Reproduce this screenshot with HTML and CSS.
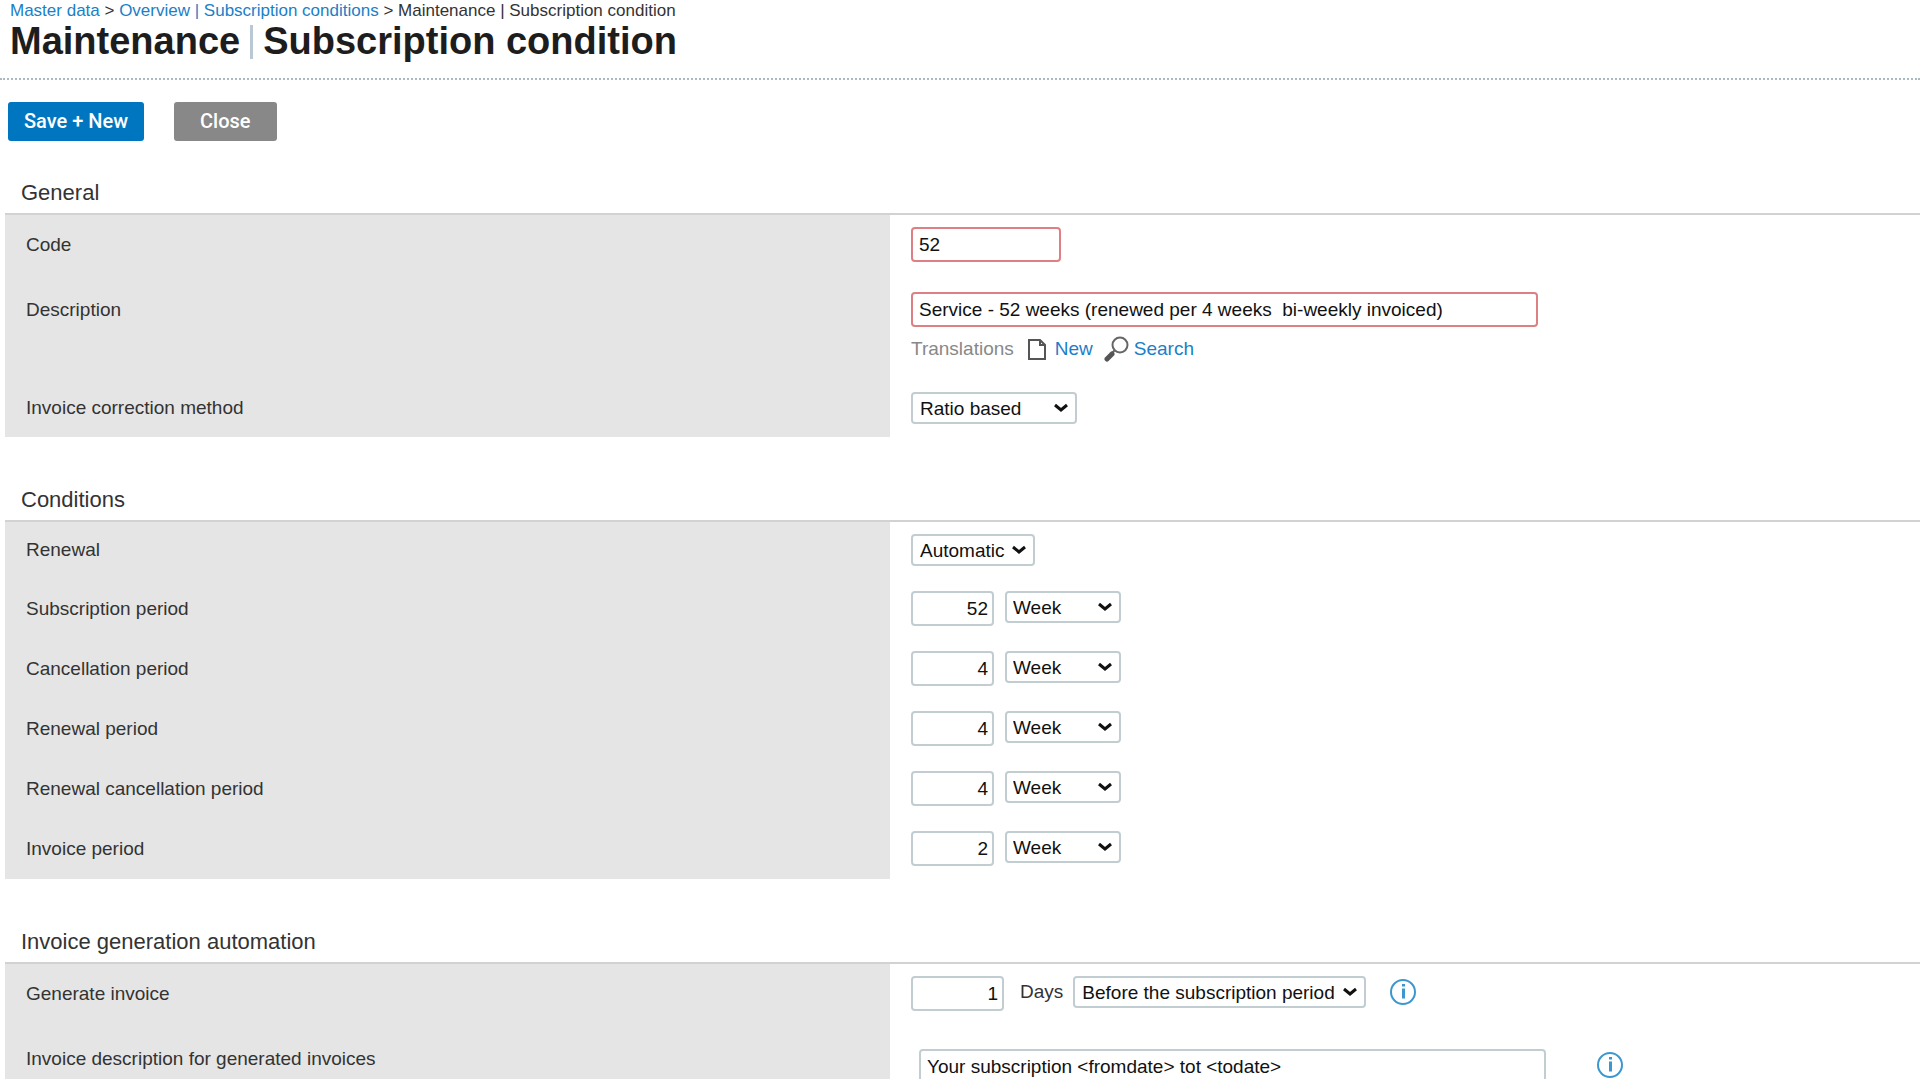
FILE: index.html
```html
<!DOCTYPE html>
<html lang="en">
<head>
    <meta charset="UTF-8">
    <title>Maintenance | Subscription condition</title>
    <link rel="stylesheet" href="styles.css">
</head>
<body>
    <header class="page-header">
        <nav class="breadcrumb">
            <a href="#">Master data</a> &gt; <a href="#">Overview | Subscription conditions</a> &gt; Maintenance | Subscription condition
        </nav>
        <h1>Maintenance<span class="divider"></span>Subscription condition</h1>
    </header>

    <form>
        <div class="toolbar">
            <button type="submit" class="primary">Save + New</button>
            <button type="button">Close</button>
        </div>

        <section>
            <h2>General</h2>
            <div class="row roomy">
                <label for="code">Code</label>
                <div class="field">
                    <input type="text" id="code" class="required short" value="52">
                </div>
            </div>
            <div class="row roomy">
                <label for="description">Description</label>
                <div class="field">
                    <input type="text" id="description" class="required long" value="Service - 52 weeks (renewed per 4 weeks  bi-weekly invoiced)">
                    <div class="translations">
                        <span>Translations</span>
                        <a href="#" class="new">
                            <svg width="20" height="22" viewBox="0 0 20 22" fill="none" stroke="#555" stroke-width="2">
                                <path d="M2 2h11l5 5v14H2z"/>
                                <path d="M13 2v5h5"/>
                            </svg>
                            New
                        </a>
                        <a href="#" class="search">
                            <svg width="27" height="26" viewBox="0 0 27 26" fill="none" stroke="#666">
                                <circle cx="17" cy="9" r="7.5" stroke-width="2"/>
                                <path d="M11.500 14.500l-2 2" stroke-width="2"/>
                                <path d="M9 18l-5 5" stroke="#555" stroke-width="5" stroke-linecap="round"/>
                            </svg>
                            Search
                        </a>
                    </div>
                </div>
            </div>
            <div class="row single">
                <label for="correction">Invoice correction method</label>
                <div class="field">
                    <select id="correction" class="method"><option>Ratio based</option></select>
                </div>
            </div>
        </section>

        <section>
            <h2>Conditions</h2>
            <div class="row single">
                <label for="renewal">Renewal</label>
                <div class="field">
                    <select id="renewal" class="renewal"><option>Automatic</option></select>
                </div>
            </div>
            <div class="row">
                <label for="subscription-period">Subscription period</label>
                <div class="field">
                    <input type="text" id="subscription-period" class="number" value="52">
                    <select class="unit" aria-label="Subscription period unit"><option>Week</option></select>
                </div>
            </div>
            <div class="row">
                <label for="cancellation-period">Cancellation period</label>
                <div class="field">
                    <input type="text" id="cancellation-period" class="number" value="4">
                    <select class="unit" aria-label="Cancellation period unit"><option>Week</option></select>
                </div>
            </div>
            <div class="row">
                <label for="renewal-period">Renewal period</label>
                <div class="field">
                    <input type="text" id="renewal-period" class="number" value="4">
                    <select class="unit" aria-label="Renewal period unit"><option>Week</option></select>
                </div>
            </div>
            <div class="row">
                <label for="renewal-cancellation">Renewal cancellation period</label>
                <div class="field">
                    <input type="text" id="renewal-cancellation" class="number" value="4">
                    <select class="unit" aria-label="Renewal cancellation period unit"><option>Week</option></select>
                </div>
            </div>
            <div class="row">
                <label for="invoice-period">Invoice period</label>
                <div class="field">
                    <input type="text" id="invoice-period" class="number" value="2">
                    <select class="unit" aria-label="Invoice period unit"><option>Week</option></select>
                </div>
            </div>
        </section>

        <section>
            <h2>Invoice generation automation</h2>
            <div class="row roomy">
                <label for="generate">Generate invoice</label>
                <div class="field">
                    <input type="text" id="generate" class="number days" value="1">
                    <span class="suffix">Days</span>
                    <select class="moment" aria-label="Moment of generation"><option>Before the subscription period</option></select>
                    <a href="#" class="info" aria-label="Info">
                        <svg width="26" height="26" viewBox="0 0 26 26" fill="none" stroke="#3c97cf" stroke-width="2">
                            <circle cx="13" cy="13" r="12"/>
                            <path d="M13.500 9.500v10M13.500 5v2.500" stroke-width="3"/>
                        </svg>
                    </a>
                </div>
            </div>
            <div class="row roomy">
                <label for="invoice-description">Invoice description for generated invoices</label>
                <div class="field inset">
                    <input type="text" id="invoice-description" class="long" value="Your subscription &lt;fromdate&gt; tot &lt;todate&gt;">
                    <a href="#" class="info far" aria-label="Info">
                        <svg width="26" height="26" viewBox="0 0 26 26" fill="none" stroke="#3c97cf" stroke-width="2">
                            <circle cx="13" cy="13" r="12"/>
                            <path d="M13.500 9.500v10M13.500 5v2.500" stroke-width="3"/>
                        </svg>
                    </a>
                </div>
            </div>
        </section>
    </form>
</body>
</html>
```
FILE: styles.css
```css
* {
    box-sizing: border-box;
}
body {
    margin: 0;
    font-family: "Liberation Sans", Arial, sans-serif;
    font-size: 19px;
    color: #333;
    background-color: #fff;
}
a {
    color: #1a80c8;
    text-decoration: none;
}
.page-header {
    padding: 1px 10px 16px;
    border-bottom: 2px dotted #a9bac2;
}
.breadcrumb {
    font-size: 17px;
    line-height: 20px;
}
h1 {
    display: flex;
    align-items: center;
    margin: 0;
    font-size: 38px;
    line-height: 41px;
    color: #1d1d1d;
}
.divider {
    width: 3px;
    height: 34px;
    margin: 0 10px;
    background-color: #b8c8d4;
}
.toolbar {
    display: flex;
    gap: 30px;
    padding: 22px 8px 0;
}
button {
    height: 39px;
    padding: 0 26px 2px;
    font-family: Roboto, "Liberation Sans", sans-serif;
    font-size: 20px;
    font-weight: 500;
    color: #fff;
    background-color: #888;
    border: none;
    border-radius: 3px;
    cursor: pointer;
}
.primary {
    padding: 0 16px 2px;
    background-color: #0076c0;
}
section {
    padding-left: 5px;
}
h2 {
    margin: 0;
    padding: 39px 16px 7px;
    font-size: 22px;
    font-weight: normal;
    line-height: 26px;
    border-bottom: 2px solid #d2d2d2;
}
section + section h2 {
    padding-top: 50px;
}
.row {
    display: grid;
    grid-template-columns: 885fr 1030fr;
    line-height: 35px;
}
.row > label {
    padding: 12px 21px 13px;
    background-color: #e5e5e5;
}
.field {
    display: flex;
    flex-wrap: wrap;
    align-items: flex-start;
    align-content: flex-start;
    padding: 12px 21px 13px;
}
.single {
    line-height: 32px;
}
.roomy > label,
.roomy > .field {
    padding-bottom: 18px;
}
input,
select {
    font-family: inherit;
    font-size: 19px;
    color: #111;
    background-color: #fff;
    border: 2px solid #c1cdd1;
    border-radius: 4px;
}
input {
    height: 35px;
    padding: 0 6px;
}
select {
    appearance: none;
    height: 32px;
    padding: 0 7px;
    background-image: url("data:image/svg+xml,%3Csvg xmlns='http://www.w3.org/2000/svg' width='16' height='10'%3E%3Cpath d='M2 2l6 5 6-5' fill='none' stroke='%23111' stroke-width='3'/%3E%3C/svg%3E");
    background-repeat: no-repeat;
    background-position: right 6px center;
}
.required {
    border-color: #de7f83;
}
.short {
    width: 150px;
}
.long {
    width: 627px;
}
.number {
    width: 83px;
    padding-right: 4px;
    text-align: right;
}
.days {
    width: 93px;
}
.method {
    width: 166px;
}
.renewal {
    width: 124px;
}
.unit {
    width: 116px;
    margin-left: 11px;
    padding-left: 6px;
}
.moment {
    width: 293px;
}
.suffix {
    padding: 0 10px 0 16px;
    line-height: 32px;
}
.translations {
    display: flex;
    width: 100%;
    padding-top: 8px;
    line-height: 27px;
    color: #888;
}
.translations a {
    display: flex;
    align-items: center;
}
.new {
    gap: 8px;
    margin: 0 10px 0 13px;
}
.search {
    gap: 4px;
}
.info {
    display: flex;
    margin: 3px 0 0 24px;
}
.inset {
    padding-top: 20px;
    padding-left: 29px;
}
.far {
    margin-left: 51px;
}
```
